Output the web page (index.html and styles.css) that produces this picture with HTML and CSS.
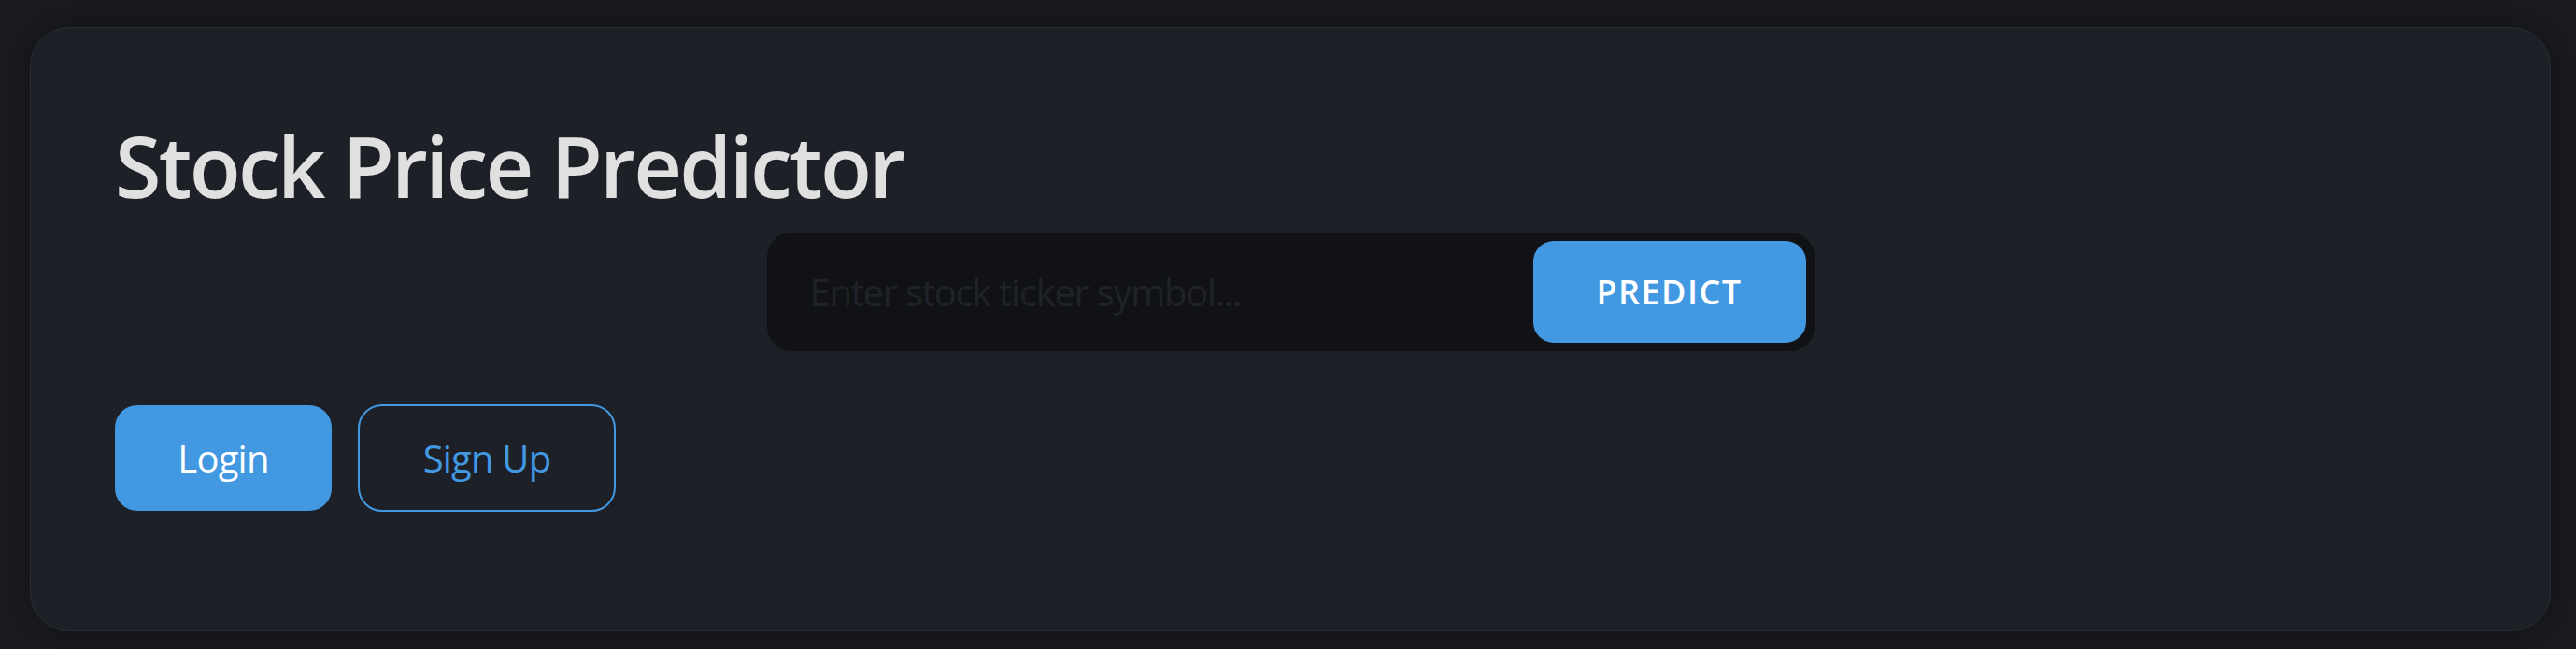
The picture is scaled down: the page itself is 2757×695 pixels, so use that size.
FILE: index.html
```html
<!DOCTYPE html>
<html lang="en">
<head>
<meta charset="utf-8">
<title>Stock Price Predictor</title>
<link rel="stylesheet" href="styles.css">
</head>
<body>
  <main class="card">
    <h1 class="title">Stock Price Predictor</h1>
    <form class="search" onsubmit="return false;">
      <input class="search-input" type="text" placeholder="Enter stock ticker symbol...">
      <button class="predict-btn" type="submit">PREDICT</button>
    </form>
    <div class="auth">
      <button class="btn btn-primary" type="button">Login</button>
      <button class="btn btn-outline" type="button">Sign Up</button>
    </div>
  </main>
</body>
</html>
```

FILE: styles.css
```css
* { box-sizing: border-box; }

html, body {
  margin: 0;
  height: 100%;
}

body {
  background: #1a1b1e;
  padding: 29px 27px 19px 32px;
  font-family: "Open Sans", "Noto Sans", sans-serif;
}

.card {
  background: #1e2028;
  border: 1.5px solid #2a2d35;
  border-radius: 42px;
  box-shadow: 0 0 40px rgba(0, 0, 0, 0.35);
  padding: 93px 90px 127px 90px;
  display: flex;
  flex-direction: column;
}

.title {
  margin: 0;
  font-size: 90px;
  line-height: 108px;
  font-weight: 600;
  color: #e0e0e0;
  letter-spacing: -2.7px;
}

.search {
  align-self: center;
  margin-top: 18px;
  width: 1121px;
  height: 127px;
  background: #111216;
  border-radius: 26px;
  padding: 9px;
  display: flex;
  align-items: stretch;
}

.search-input {
  flex: 1;
  min-width: 0;
  background: transparent;
  border: 0;
  outline: none;
  padding: 0 0 0 37px;
  font-family: inherit;
  font-size: 40px;
  color: #e0e0e0;
  letter-spacing: -1.3px;
}

.search-input::placeholder {
  color: #1f2229;
}

.predict-btn {
  width: 292px;
  background: #4299e1;
  color: #ffffff;
  border: 0;
  border-radius: 22px;
  font-family: inherit;
  font-size: 36px;
  font-weight: 600;
  letter-spacing: 1.5px;
}

.auth {
  display: flex;
  align-items: center;
  gap: 28px;
  margin-top: 57px;
}

.btn {
  font-family: inherit;
  font-size: 40px;
  letter-spacing: -0.8px;
  border-radius: 24px;
}

.btn-primary {
  width: 232px;
  height: 113px;
  background: #4299e1;
  color: #ffffff;
  border: 0;
}

.btn-outline {
  width: 276px;
  height: 115px;
  background: transparent;
  color: #4299e1;
  border: 2px solid #4299e1;
  border-radius: 26px;
}
```
